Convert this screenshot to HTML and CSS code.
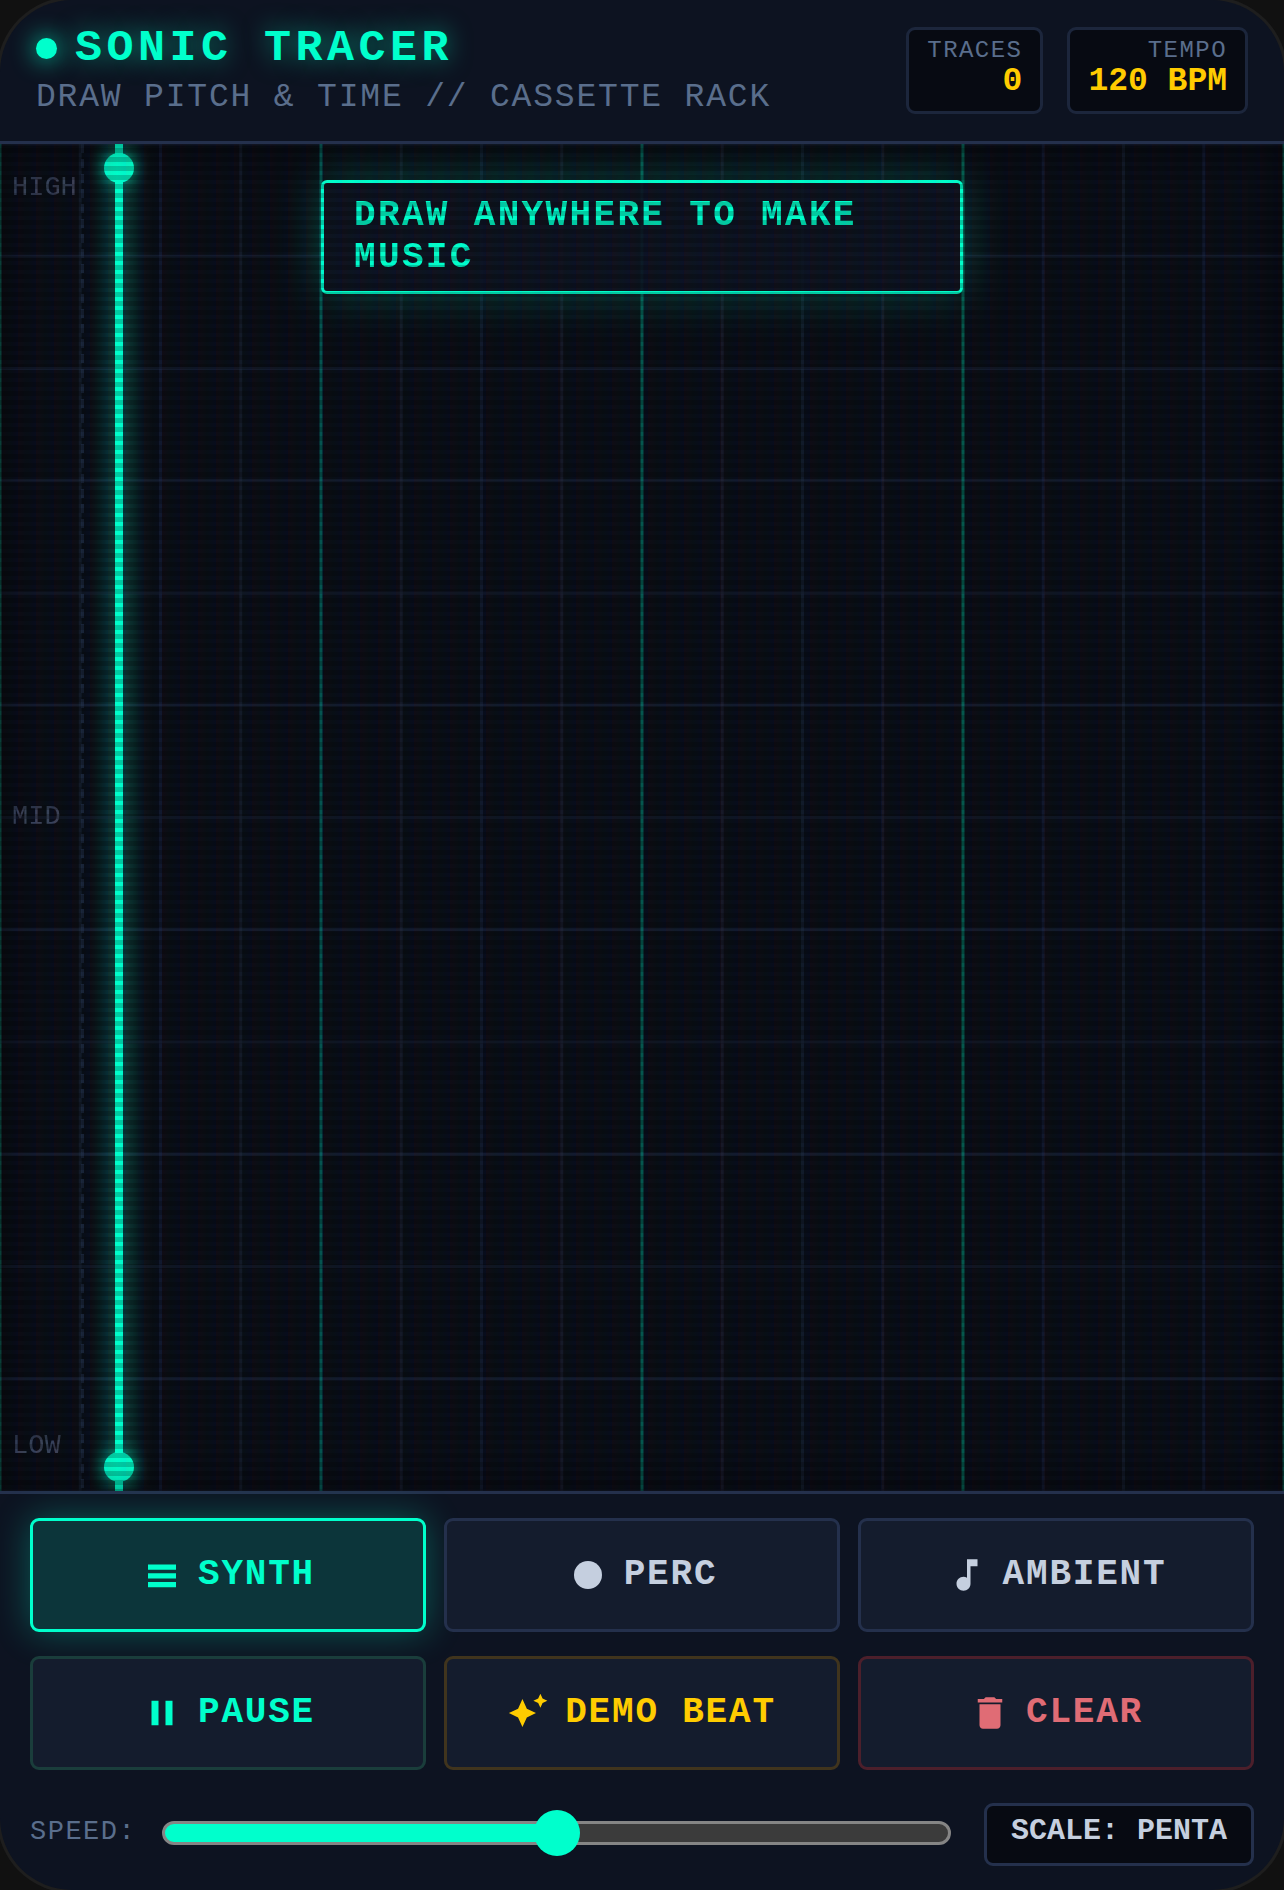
FILE: index.html
```html
<!DOCTYPE html>
<html lang="en">
<head>
  <meta charset="UTF-8" />
  <meta name="viewport" content="width=device-width, initial-scale=1.0"/>
  <title>Sonic Tracer</title>
  <link rel="stylesheet" href="styles.css">
</head>
<body>
  <div class="device">
    <header class="header">
      <div class="brand">
        <h1 class="title"><span class="led"></span>SONIC TRACER</h1>
        <div class="subtitle">DRAW PITCH &amp; TIME // CASSETTE RACK</div>
      </div>
      <div class="stats">
        <div class="stat">
          <div class="stat-label">TRACES</div>
          <div class="stat-value" id="traces">0</div>
        </div>
        <div class="stat">
          <div class="stat-label">TEMPO</div>
          <div class="stat-value" id="tempo">120 BPM</div>
        </div>
      </div>
    </header>

    <main class="stage" id="stage">
      <canvas class="grid" id="grid"></canvas>
      <div class="pitches">
        <span>HIGH</span>
        <span>MID</span>
        <span>LOW</span>
      </div>
      <div class="playhead"></div>
      <div class="hint">DRAW ANYWHERE TO MAKE MUSIC</div>
      <div class="scanlines"></div>
    </main>

    <footer class="panel">
      <div class="buttons">
        <button class="btn active" type="button">
          <svg class="icon" viewBox="0 0 24 24"><path d="M4 6h16v3H4zM4 11h16v3H4zM4 16h16v3H4z"/></svg>
          SYNTH
        </button>
        <button class="btn" type="button">
          <svg class="icon" viewBox="0 0 24 24"><circle cx="12" cy="12" r="8"/></svg>
          PERC
        </button>
        <button class="btn" type="button">
          <svg class="icon" viewBox="0 0 24 24"><path d="M12 3v10.55c-.59-.34-1.27-.55-2-.55-2.21 0-4 1.79-4 4s1.79 4 4 4 4-1.79 4-4V7h4V3h-6z"/></svg>
          AMBIENT
        </button>
        <button class="btn play" type="button">
          <svg class="icon" viewBox="0 0 24 24"><path d="M6 19h4V5H6v14zm8-14v14h4V5h-4z"/></svg>
          PAUSE
        </button>
        <button class="btn demo" type="button">
          <svg class="icon" viewBox="0 0 24 24"><path d="M18.5 9l1.25-2.75L22.500 5l-2.75-1.25L18.500 1l-1.25 2.750L14.500 5l2.75 1.250L18.500 9zm-7.750.5L8.250 4 5.750 9.500.5 12l5.250 2.500L8.250 20l2.500-5.500L16 12l-5.250-2.500z"/></svg>
          DEMO BEAT
        </button>
        <button class="btn clear" type="button">
          <svg class="icon" viewBox="0 0 24 24"><path d="M6 19c0 1.1.9 2 2 2h8c1.1 0 2-.9 2-2V7H6v12zM19 4h-3.5l-1-1h-5l-1 1H5v2h14V4z"/></svg>
          CLEAR
        </button>
      </div>
      <div class="controls">
        <label class="speed-label" for="speed">SPEED:</label>
        <input class="speed" type="range" id="speed" min="60" max="180" value="120">
        <button class="scale" type="button">SCALE: PENTA</button>
      </div>
    </footer>
  </div>

  <script src="script.js"></script>
</body>
</html>
```

FILE: styles.css
```css
* {
  box-sizing: border-box;
}

body {
  margin: 0;
  background: #111;
  color: #c5cfdf;
  font-family: "Liberation Mono", "Courier New", monospace;
  overflow: hidden;
}

button {
  font-family: inherit;
  cursor: pointer;
}

.device {
  display: flex;
  flex-direction: column;
  height: 100vh;
  background: #0d1321;
  border-radius: 72px;
  box-shadow: 0 0 0 3px #1e1e1e;
  overflow: hidden;
}

/* header */
.header {
  display: flex;
  justify-content: space-between;
  padding: 27px 36px;
  border-bottom: 3px solid #24304c;
}

.title {
  display: flex;
  align-items: center;
  gap: 18px;
  margin: 0;
  font-size: 45px;
  line-height: 43px;
  letter-spacing: 0.1em;
  color: #00ffcc;
  text-shadow: 0 0 24px rgba(0, 255, 204, 0.5);
}

.led {
  width: 21px;
  height: 21px;
  border-radius: 50%;
  background: #00ffcc;
  box-shadow: 0 0 24px rgba(0, 255, 204, 0.9);
}

.subtitle {
  margin-top: 11px;
  font-size: 33px;
  line-height: 33px;
  letter-spacing: 0.055em;
  color: #5a6e8c;
}

.stats {
  display: flex;
  gap: 24px;
}

.stat {
  padding: 7px 18px 11px;
  border: 3px solid #1c263c;
  border-radius: 9px;
  background: #070a12;
  text-align: right;
}

.stat-label {
  font-size: 24px;
  line-height: 27px;
  letter-spacing: 0.06em;
  color: #5a6e8c;
}

.stat-value {
  font-size: 33px;
  line-height: 36px;
  font-weight: bold;
  color: #ffcc00;
}

/* drawing area */
.stage {
  position: relative;
  flex: 1;
  min-height: 0;
  background: #090d16;
  overflow: hidden;
}

.grid {
  position: absolute;
  inset: 0;
  width: 100%;
  height: 100%;
}

.pitches {
  position: absolute;
  inset: 28px 0 28px 12px;
  display: flex;
  flex-direction: column;
  justify-content: space-between;
  font-size: 27px;
  line-height: 33px;
  color: #384258;
}

.playhead {
  position: absolute;
  top: 0;
  bottom: 0;
  left: 8.95%;
  width: 8px;
  background: #00ffcc;
  box-shadow: 0 0 24px rgba(0, 255, 204, 0.8);
}

.playhead::before,
.playhead::after {
  content: "";
  position: absolute;
  left: -11px;
  width: 30px;
  height: 30px;
  border-radius: 50%;
  background: #00ffcc;
  box-shadow: 0 0 18px rgba(0, 255, 204, 0.7);
}

.playhead::before {
  top: 9px;
}

.playhead::after {
  bottom: 9px;
}

.hint {
  position: absolute;
  top: 36px;
  left: 25%;
  width: 50%;
  padding: 12px 30px;
  border: 3px solid #00ffcc;
  border-radius: 6px;
  background: rgba(13, 19, 33, 0.9);
  box-shadow: 0 0 45px rgba(0, 255, 204, 0.25);
  font-size: 36px;
  line-height: 42px;
  font-weight: bold;
  letter-spacing: 0.065em;
  color: #00ffcc;
}

.scanlines {
  position: absolute;
  inset: 0;
  background:
    linear-gradient(rgba(0, 0, 0, 0) 50%, rgba(0, 0, 0, 0.2) 50%),
    linear-gradient(90deg, rgba(255, 0, 0, 0.03), rgba(0, 255, 0, 0.01), rgba(0, 0, 255, 0.03));
  background-size: 100% 9px, 18px 100%;
  box-shadow: inset 0 0 30px rgba(0, 0, 0, 0.5);
  pointer-events: none;
}

/* bottom panel */
.panel {
  padding: 24px 30px;
  border-top: 3px solid #24304c;
}

.buttons {
  display: grid;
  grid-template-columns: repeat(3, 1fr);
  gap: 24px 18px;
}

.btn {
  display: flex;
  align-items: center;
  justify-content: center;
  gap: 15px;
  height: 114px;
  padding: 0 0 2px;
  border: 3px solid #24304c;
  border-radius: 9px;
  background: #141c2d;
  color: #c5cfdf;
  font-size: 36px;
  font-weight: bold;
  letter-spacing: 0.05em;
}

.icon {
  width: 42px;
  height: 42px;
  margin-top: 2px;
  fill: currentColor;
}

.btn.active {
  border-color: #00ffcc;
  background: #0c353a;
  color: #00ffcc;
  box-shadow: 0 0 36px rgba(0, 255, 204, 0.3);
}

.btn.play {
  border-color: #1a3d3b;
  color: #00ffcc;
}

.btn.demo {
  border-color: #40341d;
  color: #ffcc00;
}

.btn.clear {
  border-color: #4c1f2b;
  color: #e06c75;
}

.controls {
  display: flex;
  align-items: center;
  gap: 24px;
  margin-top: 33px;
}

.speed-label {
  padding-bottom: 6px;
  font-size: 27px;
  line-height: 30px;
  letter-spacing: 0.055em;
  color: #5a6e8c;
}

.speed {
  flex: 1;
  min-width: 0;
  height: 46px;
  margin: 0 9px 3px 2px;
  background: none;
  appearance: none;
}

.speed::-webkit-slider-runnable-track {
  height: 24px;
  border: 3px solid #858585;
  border-radius: 12px;
  background: linear-gradient(90deg, #00ffcc 50%, #3b3b3b 50%);
}

.speed::-webkit-slider-thumb {
  appearance: none;
  width: 46px;
  height: 46px;
  margin-top: -14px;
  border-radius: 50%;
  background: #00ffcc;
}

.scale {
  padding: 8px 24px 15px;
  border: 3px solid #24304c;
  border-radius: 9px;
  background: #070a12;
  color: #c5cfdf;
  font-size: 30px;
  line-height: 34px;
  font-weight: bold;
}
```

FILE: script.js
```js
const stage = document.getElementById("stage");
const canvas = document.getElementById("grid");
const ctx = canvas.getContext("2d");

const STEPS = 16;
const ROWS = 12;

function line(x1, y1, x2, y2, color) {
  ctx.strokeStyle = color;
  ctx.beginPath();
  ctx.moveTo(x1, y1);
  ctx.lineTo(x2, y2);
  ctx.stroke();
}

function drawGrid() {
  const w = stage.clientWidth;
  const h = stage.clientHeight;
  canvas.width = w;
  canvas.height = h;
  ctx.lineWidth = 3;

  for (let i = 0; i <= ROWS; i++) {
    const y = (h / ROWS) * i;
    line(0, y, w, y, "rgba(36, 48, 76, 0.4)");
  }

  // every fourth step is a beat
  for (let i = 0; i <= STEPS; i++) {
    const x = (w / STEPS) * i;
    line(x, 0, x, h, i % 4 === 0 ? "rgba(0, 255, 204, 0.3)" : "rgba(36, 48, 76, 0.35)");
  }

  // edge of the pitch label column
  ctx.setLineDash([9, 6]);
  line(82.5, 0, 82.5, h, "rgba(36, 48, 76, 0.6)");
  ctx.setLineDash([]);
}

drawGrid();
window.addEventListener("resize", drawGrid);
```
